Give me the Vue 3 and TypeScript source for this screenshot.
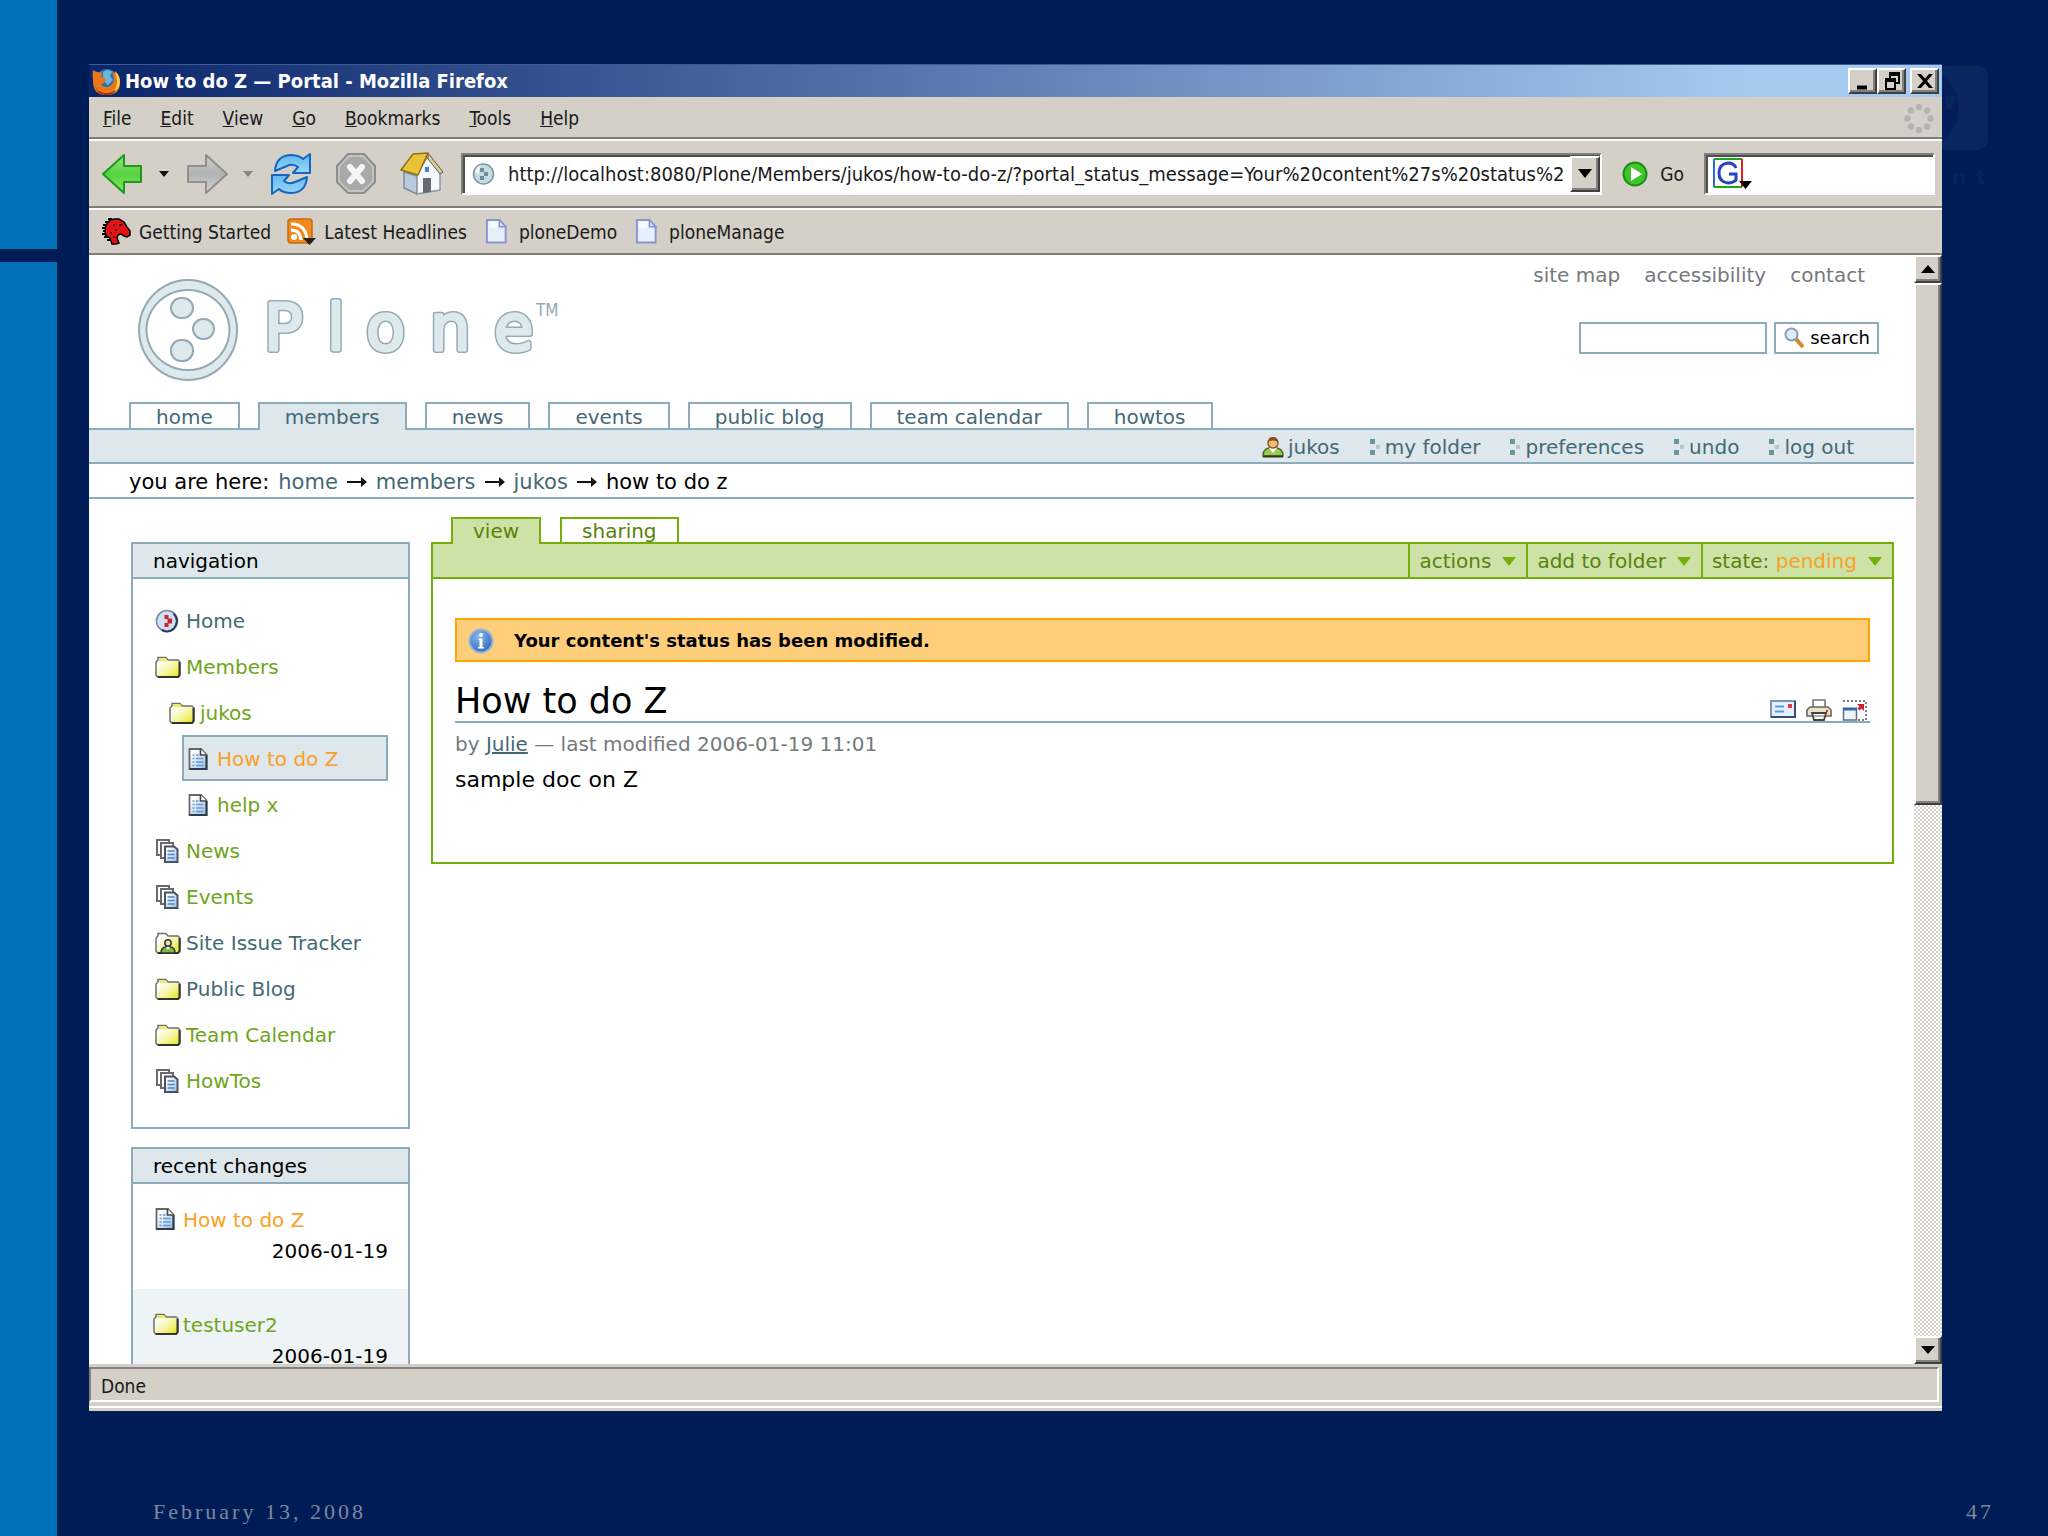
<script setup lang="ts">
import { ref } from 'vue'

interface NavItem {
  label: string
  icon: string
  level: number
  tone: 'blue' | 'green' | 'orange'
  current?: boolean
}

const menus = ['File', 'Edit', 'View', 'Go', 'Bookmarks', 'Tools', 'Help']

const address = ref(
  'http://localhost:8080/Plone/Members/jukos/how-to-do-z/?portal_status_message=Your%20content%27s%20status%20has%20been%20modified.',
)
const webQuery = ref('')
const siteQuery = ref('')

const sections = ['home', 'members', 'news', 'events', 'public blog', 'team calendar', 'howtos']
const currentSection = 'members'

const personal = ['my folder', 'preferences', 'undo', 'log out']
const crumbs = ['home', 'members', 'jukos']

const navItems: NavItem[] = [
  { label: 'Home', icon: 'site', level: 0, tone: 'blue' },
  { label: 'Members', icon: 'folder', level: 0, tone: 'green' },
  { label: 'jukos', icon: 'folder', level: 1, tone: 'green' },
  { label: 'How to do Z', icon: 'document', level: 2, tone: 'orange', current: true },
  { label: 'help x', icon: 'document', level: 2, tone: 'green' },
  { label: 'News', icon: 'topic', level: 0, tone: 'green' },
  { label: 'Events', icon: 'topic', level: 0, tone: 'green' },
  { label: 'Site Issue Tracker', icon: 'tracker', level: 0, tone: 'blue' },
  { label: 'Public Blog', icon: 'folder', level: 0, tone: 'blue' },
  { label: 'Team Calendar', icon: 'folder', level: 0, tone: 'green' },
  { label: 'HowTos', icon: 'topic', level: 0, tone: 'green' },
]

const recent = [
  { label: 'How to do Z', icon: 'document', tone: 'orange', date: '2006-01-19' },
  { label: 'testuser2', icon: 'folder', tone: 'green', date: '2006-01-19' },
]

const throbberDots = [0, 45, 90, 135, 180, 225, 270, 315]
</script>

<template>
  <!-- Shared icon shapes -->
  <svg class="defs" aria-hidden="true">
    <defs>
      <linearGradient id="folderFill" x1="0" y1="0" x2="1" y2="1">
        <stop offset="0.2" stop-color="#ffffff" />
        <stop offset="0.6" stop-color="#f4f49a" />
        <stop offset="1" stop-color="#e2e60a" />
      </linearGradient>
      <linearGradient id="paperFill" x1="0" y1="0" x2="1" y2="1">
        <stop offset="0.2" stop-color="#ffffff" />
        <stop offset="1" stop-color="#8dbcea" />
      </linearGradient>
      <linearGradient id="greenFill" x1="0" y1="0" x2="0" y2="1">
        <stop offset="0" stop-color="#9be08a" />
        <stop offset="0.5" stop-color="#55d13f" />
        <stop offset="1" stop-color="#86ec66" />
      </linearGradient>
      <linearGradient id="greyFill" x1="0" y1="0" x2="0" y2="1">
        <stop offset="0" stop-color="#cfcfcf" />
        <stop offset="0.5" stop-color="#b2b2b2" />
        <stop offset="1" stop-color="#d6d6d6" />
      </linearGradient>
      <linearGradient id="blueFill" x1="0" y1="0" x2="0" y2="1">
        <stop offset="0" stop-color="#63b7ee" />
        <stop offset="1" stop-color="#9ad8fb" />
      </linearGradient>
      <radialGradient id="infoFill" cx="0.4" cy="0.3" r="0.8">
        <stop offset="0" stop-color="#8db8ee" />
        <stop offset="1" stop-color="#2463b4" />
      </radialGradient>
      <symbol id="folder" viewBox="0 0 26 22">
        <path d="M1 19V6l2-2V1.500h8l2 2.500h10l2 2v13l-1.500 2h-21z" fill="url(#folderFill)" stroke="#6f6f6f" stroke-width="1.500" />
        <path d="M4 4V2h7l2 3H5z" fill="#e9e96a" />
        <path d="M24.500 6v13l-1.500 2H3" fill="none" stroke="#333" stroke-width="2" />
      </symbol>
      <symbol id="tracker" viewBox="0 0 26 22">
        <path d="M1 19V6l2-2V1.500h8l2 2.500h10l2 2v13l-1.500 2h-21z" fill="url(#folderFill)" stroke="#6f6f6f" stroke-width="1.500" />
        <path d="M24.500 6v13l-1.500 2H3" fill="none" stroke="#333" stroke-width="2" />
        <path d="M6 21q0-6 5-6h4q5 0 5 6z" fill="#7cb83a" stroke="#333" stroke-width="1.500" />
        <circle cx="13" cy="11" r="3.200" fill="#f0dca8" stroke="#333" stroke-width="1.500" />
        <path d="M11 15l2 3 2-3z" fill="#fff" />
      </symbol>
      <symbol id="document" viewBox="0 0 26 22">
        <path d="M3.500 1h11.500l5.500 5.500V21h-17z" fill="url(#paperFill)" stroke="#666" stroke-width="1.800" />
        <path d="M20.500 7v14h-17" fill="none" stroke="#2f3b4c" stroke-width="2" />
        <path d="M14.500 1v6h6" fill="#fff" stroke="#444" stroke-width="1.600" />
        <path d="M6.500 7h2M6.500 10.500h2M10 10.500h7.500M6.500 14h2M10 14h7.500M6.500 17.500h2M10 17.500h7.500M10 7h2.500" stroke="#6a9bd0" stroke-width="1.500" />
      </symbol>
      <symbol id="topic" viewBox="0 0 26 24">
        <path d="M2 1h12v15H2z" fill="#fff" stroke="#6a6a6a" stroke-width="2" />
        <path d="M6 4h12v15H6z" fill="#fff" stroke="#6a6a6a" stroke-width="2" />
        <path d="M10 7.500h9l3.500 3V23H10z" fill="url(#paperFill)" stroke="#4b5360" stroke-width="2" />
        <path d="M12.500 12h7M12.500 15.500h7M12.500 19h7" stroke="#4f86c4" stroke-width="1.600" />
      </symbol>
      <symbol id="site" viewBox="0 0 26 24">
        <circle cx="12" cy="12" r="10.500" fill="#cfe0f6" stroke="#7a8ba6" stroke-width="1.600" />
        <path d="M18.500 4.500q6.500 6.500.500 15-5.500 5-12 1.500" fill="none" stroke="#333c55" stroke-width="2" />
        <path d="M9.500 6h4v3.500h3.500v5h-3.500V18h-4v-4h3v-4h-3z" fill="#c8262c" />
      </symbol>
      <symbol id="blankPage" viewBox="0 0 24 27">
        <path d="M2 1.500h13l6.500 7V25H2z" fill="#e6effc" stroke="#8796cf" stroke-width="2" />
        <path d="M15 1.500v7h6.500z" fill="#cfe0f8" stroke="#8796cf" stroke-width="1.500" />
        <path d="M4 3h9v7h-9z" fill="#fff" opacity=".7" />
      </symbol>
    </defs>
  </svg>

  <div class="slide">
    <div class="accent"><span></span><span></span></div>
    <div class="stage">
      <svg class="brand" viewBox="0 0 84 124" aria-hidden="true">
        <rect x="-40" y="2" width="124" height="84" rx="10" fill="#0a265f" />
        <ellipse cx="14" cy="44" rx="41" ry="40" fill="#041e5a" />
        <path d="M42 32h10l-5 13h-5z" fill="#0a265f" />
        <text x="48" y="120" class="brand-text">n</text>
        <text x="72" y="120" class="brand-text">t</text>
      </svg>

      <section class="window">
        <header class="titlebar">
          <svg width="29" height="27" viewBox="0 0 29 27" aria-hidden="true">
            <circle cx="15" cy="12" r="11" fill="#2f6fae" />
            <path d="M11 4q5-4 9 0l-2 4 3 4-5 5-5-4z" fill="#6cb4dc" />
            <path d="M1 2q4 3 8 2 2 3 0 5 4 0 5 3-3 5-6 4 5 5 10 2 6-4 3-11 0-3-2-4 9 3 9 12 0 12-14 12Q1 27 1 13 0 7 1 2z" fill="#e9781c" />
            <path d="M23 3q5 4 5 11-1 8-7 10 5-6 4-12z" fill="#fbd34a" />
            <path d="M3 17q3 9 12 8 6 0 9-4-2 6-10 6Q5 27 3 17z" fill="#a52c0c" />
          </svg>
          <h1 class="caption">How to do Z — Portal - Mozilla Firefox</h1>
          <div class="caption-buttons">
            <button type="button" aria-label="Minimize"><svg width="20" height="18" viewBox="0 0 20 18"><path d="M4 13.500h10v4H4z" /></svg></button>
            <button type="button" aria-label="Restore"><svg width="20" height="18" viewBox="0 0 20 18"><path d="M7 0h11v12h-4v-2h2V4H9v2H7zM3 6h11v12H3zm2 4v6h7v-6z" fill-rule="evenodd" /></svg></button>
            <button type="button" class="close" aria-label="Close"><svg width="20" height="18" viewBox="0 0 20 18"><path d="M2 2h4l4 4.500L14 2h4l-6 7 6 7h-4l-4-4.500L6 16H2l6-7z" /></svg></button>
          </div>
        </header>

        <nav class="menubar" aria-label="Menu bar">
          <button v-for="m in menus" :key="m" type="button"><u>{{ m[0] }}</u>{{ m.slice(1) }}</button>
          <svg class="throbber" width="30" height="31" viewBox="-15 -15 30 30" aria-hidden="true">
            <circle v-for="a in throbberDots" :key="a" cx="0" cy="-11.500" r="3.200" fill="#b3b3b3" :transform="`rotate(${a})`" />
          </svg>
        </nav>

        <div class="toolbar">
          <button type="button" class="tool back" aria-label="Back">
            <svg width="42" height="40" viewBox="0 0 42 40"><path d="M1 20L22 1v11h17v16H22v11z" fill="url(#greenFill)" stroke="#1d9a1b" stroke-width="2" stroke-linejoin="round" /></svg>
          </button>
          <button type="button" class="tool drop" aria-label="Back history"><svg width="10" height="6" viewBox="0 0 10 6"><path d="M0 0h10L5 6z" fill="#111" /></svg></button>
          <button type="button" class="tool forward" aria-label="Forward">
            <svg width="42" height="40" viewBox="0 0 42 40"><path d="M41 20L20 1v11H2v16h18v11z" fill="url(#greyFill)" stroke="#8f8f8f" stroke-width="2" stroke-linejoin="round" /></svg>
          </button>
          <button type="button" class="tool drop" aria-label="Forward history"><svg width="10" height="6" viewBox="0 0 10 6"><path d="M0 0h10L5 6z" fill="#888" /></svg></button>
          <button type="button" class="tool reload" aria-label="Reload">
            <svg width="42" height="42" viewBox="0 0 42 42">
              <path d="M5 18Q6 3 20 2q9 0 13 4l7-5v19H23l5-6q-5-4-11-1-5 2-12 5z" fill="url(#blueFill)" stroke="#1466c0" stroke-width="2" stroke-linejoin="round" />
              <path d="M37 24q-1 15-15 16-9 0-13-4l-7 5V22h17l-5 6q5 4 11 1 5-2 12-5z" fill="url(#blueFill)" stroke="#1466c0" stroke-width="2" stroke-linejoin="round" />
            </svg>
          </button>
          <button type="button" class="tool stop" aria-label="Stop">
            <svg width="40" height="42" viewBox="0 0 40 42">
              <path d="M12 1h16l11 12v16L28 40H12L1 29V13z" fill="#c4c4c4" stroke="#8d8d8d" stroke-width="2" />
              <path d="M13 4h14l9 10v14l-9 9H13l-9-9V14z" fill="#a9a9a9" />
              <path d="M14 14l12 14M26 14L14 28" stroke="#f5f5f5" stroke-width="6" stroke-linecap="round" />
            </svg>
          </button>
          <button type="button" class="tool home" aria-label="Home">
            <svg width="44" height="44" viewBox="0 0 44 44">
              <path d="M4 20l13 4v18L4 36z" fill="#b9c8dc" stroke="#7f8b9c" stroke-width="1.500" />
              <path d="M17 42V22L28 4l12 16v18z" fill="#f4f7fc" stroke="#8d97a6" stroke-width="1.500" />
              <path d="M28 1l15 19-3 2L28 7z" fill="#d6cc9c" stroke="#5f5a45" stroke-width="1" />
              <path d="M13 2l15-1-10 22L1 18z" fill="#e8c338" stroke="#8f7216" stroke-width="1.500" stroke-linejoin="round" />
              <path d="M23 41V26h8v14z" fill="#686b73" />
              <rect x="25" y="15" width="4" height="5" fill="#3a83d8" />
            </svg>
          </button>
          <div class="address">
            <svg width="23" height="22" viewBox="0 0 23 22" aria-hidden="true">
              <circle cx="11.500" cy="11" r="10" fill="#c6dbe0" stroke="#7c969e" stroke-width="1.500" />
              <path d="M8 5h4v4H8zM12 9h4v4h-4zM8 13h4v4H8z" fill="#6f8b93" />
              <path d="M3 8q2-5 6-6L6 12z" fill="#f1f8fa" />
            </svg>
            <input v-model="address" type="text" aria-label="Location" />
            <button type="button" aria-label="Show history"><svg width="14" height="10" viewBox="0 0 14 10"><path d="M0 0h14L7 9z" /></svg></button>
          </div>
          <button type="button" class="tool go">
            <svg width="26" height="26" viewBox="0 0 26 26" aria-hidden="true">
              <circle cx="13" cy="13" r="11.500" fill="#3fc42c" stroke="#1b8f14" stroke-width="2" />
              <path d="M9 6l11 7-11 7z" fill="#fff" />
            </svg>
            <span>Go</span>
          </button>
          <div class="websearch">
            <svg width="40" height="32" viewBox="0 0 40 32" aria-hidden="true">
              <path d="M1 1h28" stroke="#1ca81c" stroke-width="2" />
              <path d="M1 1v28" stroke="#2b6bd6" stroke-width="2" />
              <path d="M1 29h28" stroke="#1ca81c" stroke-width="2" />
              <path d="M29 1v28" stroke="#e02020" stroke-width="2" />
              <path d="M23 10q-2-5-8-5-9 1-9 10t9 10q5 0 8-3v-6h-7" fill="none" stroke="#2343c4" stroke-width="3" />
              <path d="M26 23h13l-6.500 8z" fill="#000" />
            </svg>
            <input v-model="webQuery" type="text" aria-label="Search the web" />
          </div>
        </div>

        <div class="bookmarks">
          <a href="#">
            <svg width="29" height="27" viewBox="0 0 29 27" aria-hidden="true">
              <path d="M8 2l4-1h5l5 3 3 5 3 4v4l-3 2-3-1-3-2-3 1-1 3 2 5-3 1h-4l-2-6-4-2-1-5 1-6z" fill="#e01414" stroke="#000" stroke-width="1.500" />
              <path d="M1 7h3M0 10h3M1 13h3M0 16h3M2 19h4M3 4h4M5 22h4M6 1h4" stroke="#000" stroke-width="2" />
              <path d="M17 6h3v2h-3zM11 6h2v2h-2zM13 11h2v2h-2zM8 14h2v2H8zM11 18h2v2h-2z" fill="#5e0505" />
            </svg>
            <span>Getting Started</span>
          </a>
          <a href="#">
            <svg width="29" height="27" viewBox="0 0 29 27" aria-hidden="true">
              <rect x="1" y="1" width="24" height="24" rx="3" fill="#f18a1c" stroke="#c86a0c" stroke-width="1.500" />
              <circle cx="7" cy="19" r="3" fill="#fff" />
              <path d="M4 12q9 0 10 10M4 6q15 0 16 16" fill="none" stroke="#fff" stroke-width="3" />
              <path d="M16 20h13l-6.500 7z" fill="#222" />
            </svg>
            <span>Latest Headlines</span>
          </a>
          <a href="#" class="plain"><svg width="23" height="27"><use href="#blankPage" /></svg><span>ploneDemo</span></a>
          <a href="#" class="plain"><svg width="23" height="27"><use href="#blankPage" /></svg><span>ploneManage</span></a>
        </div>

        <div class="viewport">
          <div class="portal">
            <header class="portal-top">
              <a href="#" class="logo" aria-label="Plone">
                <svg width="430" height="102" viewBox="0 0 430 102">
                  <g fill="#dee9ee" stroke="#93a9b4" stroke-width="2">
                    <path d="M51 1a49 50 0 1 0 .100 0zM51 11a41.500 40 0 1 1-.100 0z" fill-rule="evenodd" />
                    <rect x="34" y="19" width="22" height="20" rx="10" />
                    <rect x="56" y="40" width="21" height="20" rx="10" />
                    <rect x="34" y="61" width="22" height="21" rx="10" />
                  </g>
                  <g class="wordmark edge"><text x="127 190 229 293 357" y="71">Plone</text></g>
                  <g class="wordmark face"><text x="127 190 229 293 357" y="71">Plone</text></g>
                  <text x="399" y="37" class="tm">TM</text>
                </svg>
              </a>
              <div class="site-tools">
                <nav class="site-links"><a href="#">site map</a><a href="#">accessibility</a><a href="#">contact</a></nav>
                <form class="site-search" @submit.prevent>
                  <input v-model="siteQuery" type="text" aria-label="Search site" />
                  <button type="submit">
                    <svg width="21" height="22" viewBox="0 0 21 22" aria-hidden="true">
                      <path d="M12 12l7 8" stroke="#d08a2e" stroke-width="4" />
                      <circle cx="7.500" cy="7.500" r="6" fill="#dcebfb" stroke="#8f9cb5" stroke-width="2" />
                    </svg>
                    search
                  </button>
                </form>
              </div>
            </header>

            <nav class="section-tabs">
              <a v-for="s in sections" :key="s" href="#" :class="{ selected: s === currentSection }">{{ s }}</a>
            </nav>

            <nav class="personal">
              <a href="#">
                <svg width="22" height="22" viewBox="0 0 22 22" aria-hidden="true">
                  <path d="M1 20q0-7 6-8h8q6 1 6 8z" fill="#9bcb4c" stroke="#4f6b2a" stroke-width="1.500" />
                  <path d="M7 12l4 5 4-5z" fill="#fff" />
                  <circle cx="11" cy="7" r="5" fill="#f0bd7c" stroke="#8a5a28" stroke-width="1.500" />
                  <path d="M6 6q0-5 5-5t5 5q-5-3-10 0z" fill="#8a5420" />
                  <path d="M1 20.500h20" stroke="#2c3a18" stroke-width="2" />
                </svg>
                jukos
              </a>
              <a v-for="p in personal" :key="p" href="#">
                <svg width="12" height="20" viewBox="0 0 12 20" aria-hidden="true">
                  <path d="M1 2h5v5H1zM1 13h5v5H1z" fill="#6d949f" /><path d="M7 8h4v4H7z" fill="#b4c8cf" />
                </svg>
                {{ p }}
              </a>
            </nav>

            <nav class="crumbs">
              <span>you are here:</span>
              <template v-for="c in crumbs" :key="c">
                <a href="#">{{ c }}</a>
                <svg width="20" height="12" viewBox="0 0 20 12" aria-hidden="true"><path d="M0 5h14V1l6 5-6 5V7H0z" fill="#111" /></svg>
              </template>
              <span>how to do z</span>
            </nav>

            <div class="columns">
              <aside>
                <section class="portlet">
                  <h2>navigation</h2>
                  <ul class="tree">
                    <li v-for="n in navItems" :key="n.label" :class="['level' + n.level, { current: n.current }]">
                      <svg width="26" height="24" aria-hidden="true"><use :href="'#' + n.icon" /></svg>
                      <a href="#" :class="n.tone">{{ n.label }}</a>
                    </li>
                  </ul>
                </section>
                <section class="portlet">
                  <h2>recent changes</h2>
                  <dl v-for="r in recent" :key="r.label" class="change">
                    <dt>
                      <svg width="26" height="22" aria-hidden="true"><use :href="'#' + r.icon" /></svg>
                      <a href="#" :class="r.tone">{{ r.label }}</a>
                    </dt>
                    <dd>{{ r.date }}</dd>
                  </dl>
                </section>
              </aside>

              <main>
                <nav class="views"><a href="#" class="selected">view</a><a href="#">sharing</a></nav>
                <div class="editable">
                  <div class="actions">
                    <button type="button">actions<i></i></button>
                    <button type="button">add to folder<i></i></button>
                    <button type="button"><span>state: <span class="orange">pending</span></span><i></i></button>
                  </div>
                  <article>
                    <p class="message" role="status">
                      <svg width="26" height="26" viewBox="0 0 26 26" aria-hidden="true">
                        <circle cx="13" cy="13" r="11.500" fill="url(#infoFill)" stroke="#8fb3e0" stroke-width="2" />
                        <circle cx="13" cy="7" r="2" fill="#fff" />
                        <path d="M10.500 10.500h4V19H16v1.500h-6V19h1.500v-7h-1z" fill="#fff" />
                      </svg>
                      Your content's status has been modified.
                    </p>
                    <div class="heading">
                      <h2>How to do Z</h2>
                      <div class="doc-actions">
                        <a href="#" aria-label="Send this">
                          <svg width="26" height="22" viewBox="0 0 26 22">
                            <rect x="1" y="2" width="24" height="16" fill="#e4effc" stroke="#7d92b8" stroke-width="2" />
                            <path d="M25 2v16H1" fill="none" stroke="#3a4c74" stroke-width="2" />
                            <path d="M5 7.500h9M5 12.500h9" stroke="#5a9be0" stroke-width="2" />
                            <rect x="18" y="5" width="4" height="4" fill="#e03a3a" />
                          </svg>
                        </a>
                        <a href="#" aria-label="Print this">
                          <svg width="26" height="22" viewBox="0 0 26 22">
                            <path d="M7 1h12v8H7z" fill="#fff" stroke="#777" stroke-width="1.600" />
                            <path d="M4 8h18l3 3v6H1v-6z" fill="#e9e0cd" stroke="#6e665a" stroke-width="1.600" />
                            <path d="M20 11h2v2h-2z" fill="#e02a2a" />
                            <path d="M6 14h14l-2 7H8z" fill="#fff" stroke="#444" stroke-width="1.800" />
                            <path d="M8 17h10" stroke="#999" stroke-width="1.500" />
                          </svg>
                        </a>
                        <a href="#" aria-label="Toggle full screen">
                          <svg width="26" height="22" viewBox="0 0 26 22">
                            <path d="M1 2h23v19H16" fill="none" stroke="#555" stroke-width="1.500" stroke-dasharray="2 2" />
                            <rect x="1.500" y="10" width="13" height="11" fill="#eef5fd" stroke="#5c6f86" stroke-width="1.500" />
                            <path d="M1 8.500h14v3H1z" fill="#2a6aa8" />
                            <path d="M15 5h7v7l-2.500-2.500-2 2-2-2 2-2z" fill="#cc1f2b" />
                          </svg>
                        </a>
                      </div>
                    </div>
                    <p class="byline">by <a href="#">Julie</a> — last modified 2006-01-19 11:01</p>
                    <p class="body">sample doc on Z</p>
                  </article>
                </div>
              </main>
            </div>
          </div>

          <div class="scrollbar">
            <button type="button" aria-label="Scroll up"><svg width="14" height="8" viewBox="0 0 14 8"><path d="M0 8h14L7 0z" /></svg></button>
            <div class="track"><div class="thumb"></div><div class="rest"></div></div>
            <button type="button" aria-label="Scroll down"><svg width="14" height="8" viewBox="0 0 14 8"><path d="M0 0h14L7 8z" /></svg></button>
          </div>
        </div>

        <footer class="status"><span>Done</span></footer>
      </section>

      <footer class="slide-footer"><span>February 13, 2008</span><span>47</span></footer>
    </div>
  </div>
</template>

<style>
body {
  margin: 0;
  background: #001c57;
}
</style>

<style scoped>
* {
  box-sizing: border-box;
}
button,
input {
  font: inherit;
  color: inherit;
  margin: 0;
  padding: 0;
  border: 0;
  background: none;
  outline: 0;
}
a {
  color: inherit;
  text-decoration: none;
}
h1, h2, p, ul, dl, dd {
  margin: 0;
  padding: 0;
  font-weight: normal;
}
ul {
  list-style: none;
}
svg {
  display: block;
  flex: none;
}
.defs {
  position: absolute;
  width: 0;
  height: 0;
}

/* Slide */
.slide {
  display: flex;
  height: 100vh;
  background: #001c57;
}
.accent {
  display: flex;
  flex-direction: column;
  gap: 13px;
  width: 57px;
}
.accent span {
  background: #0070b8;
  flex: 1;
}
.accent span:first-child {
  flex: 0 0 249px;
}
.stage {
  position: relative;
  display: flex;
  flex-direction: column;
  flex: 1;
  min-width: 0;
  padding: 64px 106px 0 32px;
}
.brand {
  position: absolute;
  top: 64px;
  right: 60px;
  width: 84px;
  height: 124px;
}
.brand-text {
  font: bold 20px "DejaVu Sans", sans-serif;
  fill: #08225c;
}
.slide-footer {
  display: flex;
  justify-content: space-between;
  height: 125px;
  padding: 87px 0 0 64px;
  margin-right: -52px;
  font: 22px/28px "Liberation Serif", serif;
  letter-spacing: 3px;
  color: #7c889c;
}

/* Browser window */
.window {
  position: relative;
  display: flex;
  flex-direction: column;
  flex: 1;
  min-height: 0;
  background: #d4d0c8;
  font: 19px/24px "DejaVu Sans Condensed", "DejaVu Sans", sans-serif;
  color: #1a1a1a;
}
.titlebar {
  display: flex;
  align-items: center;
  height: 33px;
  padding: 0 3px;
  border-top: 1px solid #3c5a94;
  background: linear-gradient(90deg, #0a246a, #a6caf0 90%);
}
.caption {
  flex: 1;
  padding-left: 4px;
  font-size: 20px;
  font-weight: bold;
  color: #fff;
}
.caption-buttons {
  display: flex;
}
.caption-buttons button {
  display: flex;
  align-items: center;
  justify-content: center;
  width: 29px;
  height: 26px;
}
.caption-buttons .close {
  margin-left: 4px;
}
.caption-buttons button,
.scrollbar button,
.thumb,
.address button {
  background: #d4d0c8;
  border: 2px solid;
  border-color: #fff #404040 #404040 #fff;
  box-shadow: inset -2px -2px #808080;
}
.menubar {
  display: flex;
  align-items: center;
  gap: 29px;
  height: 42px;
  padding: 2px 8px 0 14px;
  border-bottom: 2px solid #807d78;
}
.throbber {
  margin-left: auto;
}
.toolbar {
  display: flex;
  align-items: center;
  height: 69px;
  padding: 0 7px 0 13px;
  border-top: 2px solid #fff;
  border-bottom: 2px solid #807d78;
}
.drop {
  margin: 0 17px 0 15px;
}
.reload {
  margin-right: 24px;
}
.stop {
  margin-right: 24px;
}
.home {
  margin-right: 17px;
}
.address,
.websearch {
  display: flex;
  align-items: center;
  height: 42px;
  background: #fff;
  border: 2px solid;
  border-color: #808080 #fff #fff #808080;
  box-shadow: inset 2px 2px #505050;
}
.address {
  flex: 1;
  min-width: 0;
  padding-left: 9px;
}
.address input {
  flex: 1;
  min-width: 0;
  margin: 0 5px 0 13px;
  font-size: 20px;
}
.address button {
  display: flex;
  align-items: center;
  justify-content: center;
  width: 30px;
  height: 36px;
}
.go {
  display: flex;
  align-items: center;
  gap: 12px;
  margin: 0 20px;
}
.websearch {
  width: 231px;
  padding-left: 7px;
}
.websearch input {
  flex: 1;
  min-width: 0;
}
.bookmarks {
  display: flex;
  align-items: center;
  gap: 16px;
  height: 47px;
  padding-left: 13px;
  border-top: 2px solid #fff;
  border-bottom: 2px solid #807d78;
}
.bookmarks a {
  display: flex;
  align-items: center;
  gap: 8px;
}
.bookmarks .plain {
  gap: 11px;
  margin-left: 2px;
}
.status {
  height: 47px;
  padding: 3px 3px 7px 0;
  background: #d4d0c8;
  border-bottom: 3px solid #d4d0c8;
  box-shadow: inset 0 -2px #fff;
}
.status span {
  display: block;
  height: 35px;
  padding: 5px 10px;
  border: 2px solid;
  border-color: #808080 #fff #fff #808080;
}

/* Scrolling page */
.viewport {
  display: flex;
  flex: 1;
  min-height: 0;
  overflow: hidden;
  background: #fff;
}
.scrollbar {
  display: flex;
  flex-direction: column;
  width: 28px;
}
.scrollbar button {
  display: flex;
  align-items: center;
  justify-content: center;
  height: 28px;
}
.track {
  display: flex;
  flex-direction: column;
  flex: 1;
  background: repeating-conic-gradient(#d4d0c8 0 25%, #fff 0 50%) 0 0 / 4px 4px;
}
.thumb {
  flex: 38;
}
.rest {
  flex: 39;
}
.portal {
  flex: 1;
  min-width: 0;
  font: 20px/24px "DejaVu Sans", sans-serif;
  color: #000;
}
.portal-top {
  display: flex;
  justify-content: space-between;
  height: 147px;
  padding-left: 48px;
}
.logo {
  padding-top: 24px;
}
.wordmark {
  font: 64px "DejaVu Sans", sans-serif;
  stroke-linejoin: round;
}
.edge {
  fill: #93a9b4;
  stroke: #93a9b4;
  stroke-width: 6px;
}
.face {
  fill: #dee9ee;
  stroke: #dee9ee;
  stroke-width: 3px;
}
.tm {
  font: 17px "DejaVu Sans Condensed", "DejaVu Sans", sans-serif;
  fill: #93a9b4;
}
.site-tools {
  display: flex;
  flex-direction: column;
  align-items: flex-end;
  gap: 35px;
  padding: 8px 35px 0 0;
}
.site-links {
  display: flex;
  gap: 24px;
  padding-right: 14px;
  color: #76797c;
}
.site-search {
  display: flex;
  align-items: center;
  gap: 7px;
}
.site-search input,
.site-search button {
  height: 32px;
  border: 2px solid #8cacbb;
}
.site-search input {
  width: 188px;
}
.site-search button {
  display: flex;
  align-items: center;
  gap: 5px;
  padding: 0 7px 0 8px;
  font-size: 18px;
}
.section-tabs {
  display: flex;
  gap: 18px;
  padding-left: 40px;
  line-height: 26px;
  color: #436976;
}
.section-tabs a {
  height: 26px;
  padding: 0 25px;
  border: 2px solid #8cacbb;
  border-bottom: 0;
}
.section-tabs .selected {
  position: relative;
  height: 28px;
  margin-bottom: -2px;
  background: #dee7ec;
}
.personal {
  display: flex;
  align-items: center;
  justify-content: flex-end;
  gap: 29px;
  height: 36px;
  padding: 2px 60px 0 0;
  background: #dee7ec;
  border-top: 2px solid #8cacbb;
  border-bottom: 2px solid #8cacbb;
  color: #436976;
}
.personal a {
  display: flex;
  align-items: center;
  gap: 4px;
}
.crumbs {
  display: flex;
  align-items: center;
  gap: 9px;
  height: 35px;
  padding: 2px 0 0 40px;
  border-bottom: 2px solid #8cacbb;
  font-size: 21px;
}
.crumbs a,
.blue {
  color: #436976;
}
.green {
  color: #6fa51a;
}
.orange {
  color: #f9a025;
}
.columns {
  display: flex;
  gap: 21px;
  padding: 0 20px 0 42px;
}
aside {
  display: flex;
  flex-direction: column;
  gap: 18px;
  flex: none;
  width: 279px;
  padding-top: 43px;
}
.portlet {
  border: 2px solid #8cacbb;
}
.portlet h2 {
  height: 35px;
  padding: 5px 20px 0;
  font-size: 20px;
  background: #dee7ec;
  border-bottom: 2px solid #8cacbb;
}
.tree {
  padding: 18px 20px 24px 18px;
}
.tree li {
  display: flex;
  align-items: center;
  gap: 5px;
  height: 46px;
  padding: 2px 2px 0;
  border: 2px solid transparent;
}
.tree .level1 {
  margin-left: 14px;
}
.tree .level2 {
  margin-left: 31px;
}
.tree .current {
  background: #dee7ec;
  border-color: #8cacbb;
}
.change {
  padding: 24px 20px 26px;
}
.change:nth-of-type(even) {
  background: #eef3f6;
}
.change dt {
  display: flex;
  gap: 4px;
}
.change dd {
  margin-top: 7px;
  text-align: right;
}
main {
  flex: 1;
  min-width: 0;
  padding-top: 18px;
}
.views {
  display: flex;
  gap: 19px;
  padding-left: 20px;
  line-height: 24px;
  color: #578308;
}
.views a {
  height: 25px;
  padding: 0 20px;
  border: 2px solid #74ae0b;
  border-bottom: 0;
}
.views .selected {
  position: relative;
  height: 27px;
  margin-bottom: -2px;
  background: #cde2a7;
}
.editable {
  border: 2px solid #74ae0b;
}
.actions {
  display: flex;
  justify-content: flex-end;
  height: 35px;
  background: #cde2a7;
  border-bottom: 2px solid #74ae0b;
  color: #578308;
}
.actions button {
  display: flex;
  align-items: center;
  gap: 11px;
  padding: 0 10px 0 9px;
  border-left: 2px solid #74ae0b;
}
.actions i {
  margin-top: 2px;
  border: 7px solid transparent;
  border-top: 9px solid #74ae0b;
  border-bottom: 0;
}
article {
  padding: 39px 22px 69px;
}
.message {
  display: flex;
  align-items: center;
  gap: 20px;
  height: 44px;
  padding: 2px 0 0 11px;
  background: #ffce7b;
  border: 2px solid #ffa500;
  font-size: 18px;
  font-weight: bold;
}
.heading {
  display: flex;
  align-items: flex-end;
  justify-content: space-between;
  margin-top: 19px;
  border-bottom: 2px solid #8cacbb;
}
.heading h2 {
  font-size: 35px;
  line-height: 40px;
}
.doc-actions {
  display: flex;
  gap: 10px;
  padding-right: 2px;
}
.byline {
  margin-top: 9px;
  font-size: 20px;
  color: #76797c;
}
.byline a {
  color: #436976;
  text-decoration: underline;
}
.body {
  margin-top: 11px;
  font-size: 22px;
  line-height: 26px;
}
</style>
